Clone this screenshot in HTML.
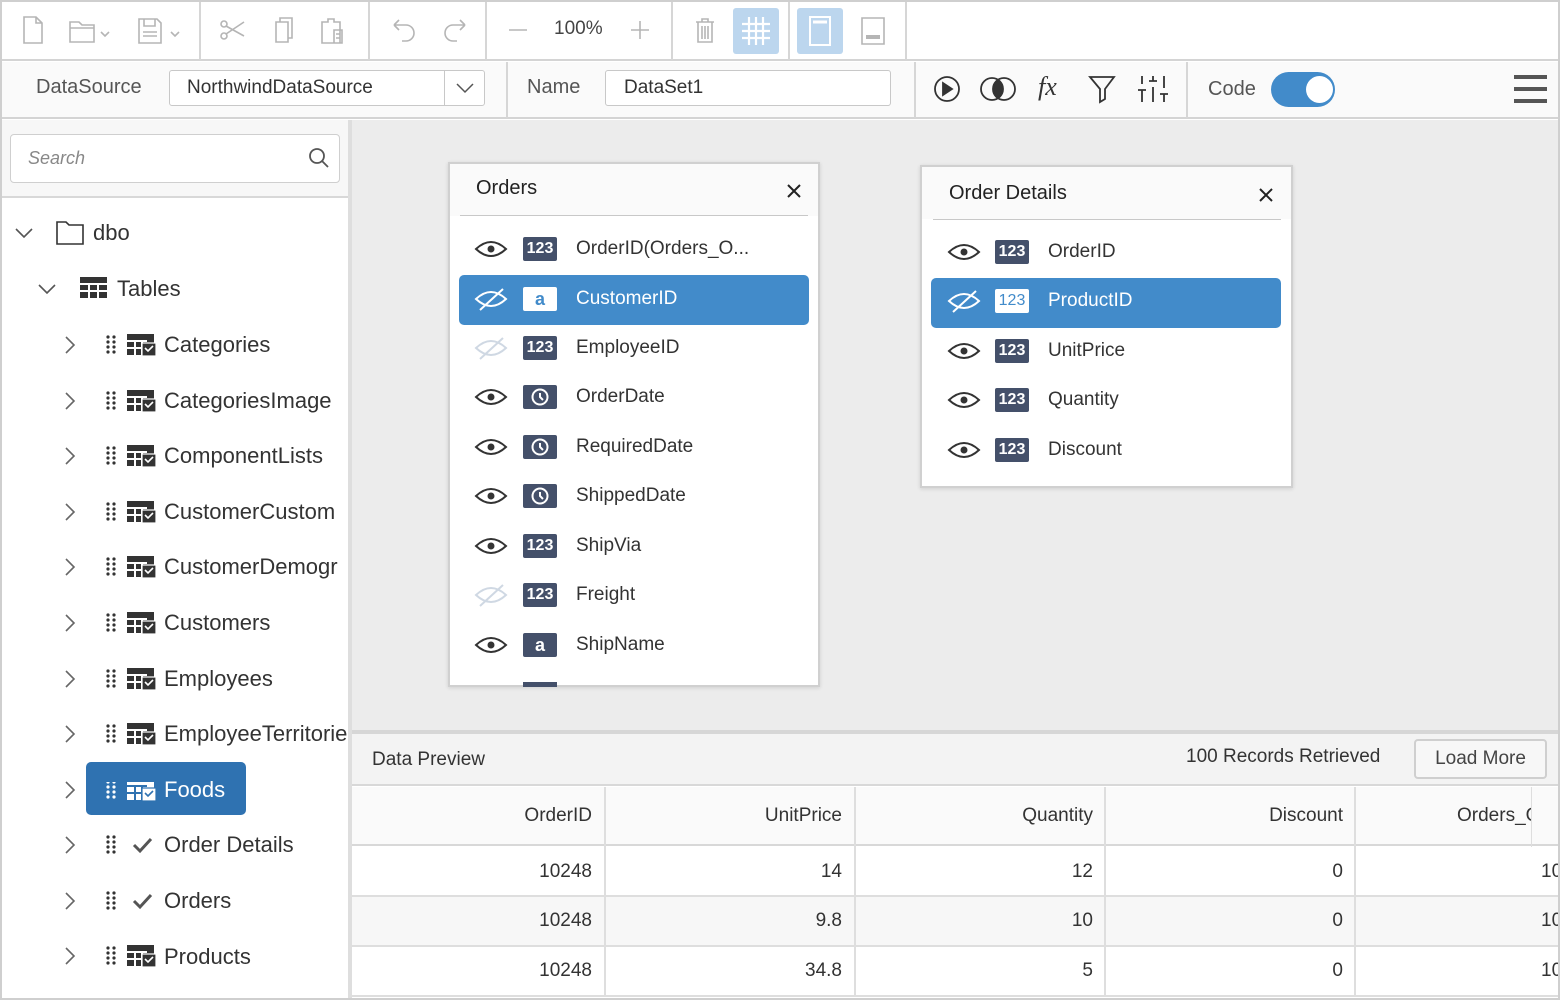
<!DOCTYPE html>
<html><head><meta charset="utf-8">
<style>
*{box-sizing:border-box;margin:0;padding:0}
body{width:1560px;height:1000px;position:relative;overflow:hidden;background:#fff;font-family:"Liberation Sans",sans-serif;color:#333}
.a{position:absolute}
.vd{position:absolute;width:2px;background:#d6d6d6}
.tr{position:absolute;left:0;font-size:22px;color:#333;white-space:nowrap;height:40px;line-height:40px}
.fld{position:absolute;font-size:19px;color:#333;white-space:nowrap;line-height:24px}
.badge{position:absolute;width:34px;height:24px;background:#44506a;border-radius:2px;color:#fff;font-size:16px;font-weight:bold;text-align:center;line-height:24px}
.th,.td{position:absolute;font-size:19px;text-align:right;white-space:nowrap}
</style></head><body>
<div class="a" style="left:0;top:0;width:1560px;height:1000px;border:2px solid #cfcfcf;z-index:50;pointer-events:none"></div>

<div class="a" style="left:0;top:0;width:1560px;height:61px;background:#fff;border-bottom:2px solid #d4d4d4"></div>
<div class="vd" style="left:199px;top:0;height:60px"></div>
<div class="vd" style="left:368px;top:0;height:60px"></div>
<div class="vd" style="left:485px;top:0;height:60px"></div>
<div class="vd" style="left:671px;top:0;height:60px"></div>
<div class="vd" style="left:788px;top:0;height:60px"></div>
<div class="vd" style="left:905px;top:0;height:60px"></div>
<svg class="a" style="left:0;top:0" width="910" height="60" fill="none" stroke="#b5b5b5" stroke-width="1.6">
 <path d="M24 17h12l6 6v20H24z M36 17v6h6"/>
 <path d="M70 22h9l3 3h12v17H70z M70 28h24"/><path d="M101 32l4 4 4-4"/>
 <path d="M139 19h18l4 4v20h-22z M144 19v7h11v-7 M143 32h14 M143 36h14"/><path d="M171 32l4 4 4-4"/>
 <circle cx="224" cy="36" r="3"/><circle cx="224" cy="24" r="3"/><path d="M226 26l18 10 M226 34l18-12"/>
 <path d="M276 22h12v20h-12z M280 22v-4h12v20h-4"/>
 <path d="M322 22h6v-3h6v3h6v21h-18z M334 30h8v13h-8z M336 34h4 M336 38h4"/>
 <path d="M394 25h12a8 8 0 0 1 0 16h-4 M394 25l5-5 M394 25l5 5"/>
 <path d="M465 25h-12a8 8 0 0 0 0 16h4 M465 25l-5-5 M465 25l-5 5"/>
 <path d="M509 30h18 M631 30h18 M640 21v18"/>
 <path d="M696 22h18 M702 22v-3h6v3 M698 22v20h14v-20 M702 26v13 M705 26v13 M708 26v13"/>
 <path d="M862 18h22v26h-22z"/><path d="M866 37h14" stroke-width="4"/>
</svg>
<div class="a" style="left:554px;top:18px;font-size:19px;color:#444">100%</div>
<div class="a" style="left:733px;top:8px;width:46px;height:46px;background:#bcd6ee;border-radius:3px"></div>
<svg class="a" style="left:733px;top:8px" width="46" height="46" stroke="#fff" stroke-width="2.2"><path d="M16 9v28 M23 9v28 M30 9v28 M9 16h28 M9 23h28 M9 30h28"/></svg>
<div class="a" style="left:797px;top:8px;width:46px;height:46px;background:#bcd6ee;border-radius:3px"></div>
<svg class="a" style="left:797px;top:8px" width="46" height="46" fill="none" stroke="#fff" stroke-width="2"><path d="M13 9h20v28H13z"/><path d="M16 14h14" stroke-width="3"/></svg>

<div class="a" style="left:0;top:62px;width:1560px;height:57px;background:#fafafa;border-bottom:2px solid #d4d4d4"></div>
<div class="vd" style="left:506px;top:62px;height:56px"></div>
<div class="vd" style="left:914px;top:62px;height:56px"></div>
<div class="vd" style="left:1186px;top:62px;height:56px"></div>
<div class="a" style="left:36px;top:76px;font-size:20px;color:#555">DataSource</div>
<div class="a" style="left:169px;top:70px;width:316px;height:36px;border:1px solid #c8c8c8;border-radius:3px;background:#fff"></div>
<div class="a" style="left:444px;top:71px;width:1px;height:34px;background:#c8c8c8"></div>
<div class="a" style="left:187px;top:77px;font-size:19px;color:#333">NorthwindDataSource</div>
<svg class="a" style="left:455px;top:80px" width="20" height="16" fill="none" stroke="#555" stroke-width="1.5"><path d="M2 4l8 8 8-8"/></svg>
<div class="a" style="left:527px;top:76px;font-size:20px;color:#555">Name</div>
<div class="a" style="left:605px;top:70px;width:286px;height:36px;border:1px solid #c8c8c8;border-radius:3px;background:#fff"></div>
<div class="a" style="left:624px;top:77px;font-size:19px;color:#333">DataSet1</div>
<svg class="a" style="left:920px;top:64px" width="260" height="54" fill="none" stroke="#333" stroke-width="1.8">
 <circle cx="27" cy="25" r="12"/><path d="M23 19v12l9-6z" fill="#333"/>
 <circle cx="72" cy="25" r="11"/><circle cx="84" cy="25" r="11"/><path d="M78 16a11 11 0 0 1 0 18a11 11 0 0 1 0-18z" fill="#333"/>
 <path d="M170 13h24l-9 12v10l-5 3v-13z"/>
 <path d="M222 12v8 M222 26v12 M218 26h8 M233 12v5 M233 23v15 M229 17h8 M244 12v12 M244 30v8 M240 30h8"/>
</svg>
<div class="a" style="left:1038px;top:72px;font-size:26px;font-style:italic;font-family:'Liberation Serif',serif;color:#333">fx</div>
<div class="a" style="left:1208px;top:78px;font-size:20px;color:#555">Code</div>
<div class="a" style="left:1271px;top:72px;width:64px;height:35px;border-radius:18px;background:#428bca"></div>
<div class="a" style="left:1306px;top:76px;width:27px;height:27px;border-radius:50%;background:#fff"></div>
<div class="a" style="left:1514px;top:75px;width:33px;height:4px;background:#555"></div>
<div class="a" style="left:1514px;top:87px;width:33px;height:4px;background:#555"></div>
<div class="a" style="left:1514px;top:99px;width:33px;height:4px;background:#555"></div>

<div class="a" style="left:0;top:120px;width:348px;height:880px;background:#fff"></div>
<div class="a" style="left:0;top:120px;width:348px;height:78px;background:#f7f7f7;border-bottom:2px solid #d8d8d8"></div>
<div class="a" style="left:348px;top:120px;width:4px;height:880px;background:#dedede"></div>
<div class="a" style="left:10px;top:134px;width:330px;height:49px;border:1px solid #cfcfcf;border-radius:4px;background:#fff"></div>
<div class="a" style="left:28px;top:148px;font-size:18px;color:#888;font-style:italic">Search</div>
<svg class="a" style="left:306px;top:145px" width="26" height="26" fill="none" stroke="#555" stroke-width="1.8"><circle cx="11" cy="11" r="7"/><path d="M16 16l6 6"/></svg>

<svg class="a" style="left:0;top:200px" width="348" height="800" fill="none" stroke="#555" stroke-width="1.6">
 <path d="M16 29l8 8 8-8"/><path d="M57 22h9l3 3h14v19H57z" stroke="#333"/>
 <path d="M39 85l8 8 8-8"/>
 <g stroke="none" fill="#333"><path d="M80 77h27v21H80z"/></g>
 <g stroke="#fff" stroke-width="2"><path d="M80 84h27 M80 91h27 M89 84v14 M98 84v14"/></g>
</svg>
<div class="tr" style="left:93px;top:213px">dbo</div>
<div class="tr" style="left:117px;top:269px">Tables</div>

<svg class="a" style="left:0;top:320px" width="348" height="680">
 <defs>
  <g id="chev"><path d="M66 0l8 8-8 8" fill="none" stroke="#666" stroke-width="1.6"/></g>
  <g id="dots" fill="#333"><circle cx="108" cy="-8" r="1.6"/><circle cx="114" cy="-8" r="1.6"/><circle cx="108" cy="-3" r="1.6"/><circle cx="114" cy="-3" r="1.6"/><circle cx="108" cy="2" r="1.6"/><circle cx="114" cy="2" r="1.6"/><circle cx="108" cy="7" r="1.6"/><circle cx="114" cy="7" r="1.6"/></g>
  <g id="tbl"><rect x="127" y="-11" width="27" height="21" fill="#333"/><path d="M127 -4h20 M127 3h20 M135 -4v14 M142 -4v14" stroke="#fff" stroke-width="2"/><rect x="142" y="-2" width="14" height="13" fill="#333" stroke="#fff" stroke-width="1.2"/><path d="M145 3l3 3 5-5" stroke="#fff" stroke-width="1.6" fill="none"/></g>
 </defs>
 <g transform="translate(0,17)"><use href="#chev" y="0"/><use href="#dots" y="8"/><use href="#tbl" y="8"/></g>
 <g transform="translate(0,73)"><use href="#chev"/><use href="#dots" y="8"/><use href="#tbl" y="8"/></g>
 <g transform="translate(0,128)"><use href="#chev"/><use href="#dots" y="8"/><use href="#tbl" y="8"/></g>
 <g transform="translate(0,184)"><use href="#chev"/><use href="#dots" y="8"/><use href="#tbl" y="8"/></g>
 <g transform="translate(0,239)"><use href="#chev"/><use href="#dots" y="8"/><use href="#tbl" y="8"/></g>
 <g transform="translate(0,295)"><use href="#chev"/><use href="#dots" y="8"/><use href="#tbl" y="8"/></g>
 <g transform="translate(0,351)"><use href="#chev"/><use href="#dots" y="8"/><use href="#tbl" y="8"/></g>
 <g transform="translate(0,406)"><use href="#chev"/><use href="#dots" y="8"/><use href="#tbl" y="8"/></g>
 <g transform="translate(0,462)"><use href="#chev"/></g>
 <g transform="translate(0,517)"><use href="#chev"/><use href="#dots" y="8"/><path d="M134 8l6 6 11-12" stroke="#555" stroke-width="3" fill="none"/></g>
 <g transform="translate(0,573)"><use href="#chev"/><use href="#dots" y="8"/><path d="M134 8l6 6 11-12" stroke="#555" stroke-width="3" fill="none"/></g>
 <g transform="translate(0,628)"><use href="#chev"/><use href="#dots" y="8"/><use href="#tbl" y="8"/></g>
</svg>
<div class="a" style="left:86px;top:762px;width:160px;height:53px;background:#2f72b1;border-radius:5px"></div>
<svg class="a" style="left:0;top:782px" width="250" height="30">
 <g fill="#fff"><circle cx="108" cy="0" r="1.6"/><circle cx="114" cy="0" r="1.6"/><circle cx="108" cy="5" r="1.6"/><circle cx="114" cy="5" r="1.6"/><circle cx="108" cy="10" r="1.6"/><circle cx="114" cy="10" r="1.6"/><circle cx="108" cy="15" r="1.6"/><circle cx="114" cy="15" r="1.6"/></g>
 <rect x="127" y="-3" width="27" height="21" fill="#fff"/><path d="M127 4h20 M127 11h20 M135 4v14 M142 4v14" stroke="#2f72b1" stroke-width="2"/><rect x="142" y="6" width="14" height="13" fill="#fff" stroke="#2f72b1" stroke-width="1.2"/><path d="M145 11l3 3 5-5" stroke="#2f72b1" stroke-width="1.6" fill="none"/>
</svg>
<div class="tr" style="left:164px;top:325px">Categories</div>
<div class="tr" style="left:164px;top:381px">CategoriesImage</div>
<div class="tr" style="left:164px;top:436px">ComponentLists</div>
<div class="tr" style="left:164px;top:492px">CustomerCustom</div>
<div class="tr" style="left:164px;top:547px">CustomerDemogr</div>
<div class="tr" style="left:164px;top:603px">Customers</div>
<div class="tr" style="left:164px;top:659px">Employees</div>
<div class="tr" style="left:164px;top:714px;width:184px;overflow:hidden">EmployeeTerritories</div>
<div class="tr" style="left:164px;top:770px;color:#fff">Foods</div>
<div class="tr" style="left:164px;top:825px">Order Details</div>
<div class="tr" style="left:164px;top:881px">Orders</div>
<div class="tr" style="left:164px;top:937px">Products</div>

<div class="a" style="left:352px;top:120px;width:1208px;height:610px;background:#ececec"></div>

<svg width="0" height="0" style="position:absolute">
 <defs>
  <g id="eye" fill="none" stroke="#333" stroke-width="2"><path d="M1 10Q16 -4 31 10Q16 24 1 10Z"/><circle cx="16" cy="10" r="3.5" fill="#333" stroke="none"/></g>
  <g id="eyeh" fill="none" stroke-width="2"><path d="M1 10Q16 -4 31 10Q16 24 1 10Z"/><path d="M5 21L28 0"/></g>
 </defs>
</svg>

<div class="a" style="left:448px;top:162px;width:372px;height:525px;background:#fff;border:2px solid #d0d0d0;box-shadow:0 1px 4px rgba(0,0,0,.12);overflow:hidden">
 <div class="a" style="left:0;top:0;width:370px;height:52px;background:#fafafa"></div>
 <div class="a" style="left:10px;top:51px;width:348px;height:1px;background:#c8c8c8"></div>
 <div class="a" style="left:26px;top:13px;font-size:20px;color:#222">Orders</div>
 <svg class="a" style="left:336px;top:19px" width="16" height="16" stroke="#222" stroke-width="2"><path d="M2 2l12 12M14 2L2 14"/></svg>
 <div class="a" style="left:9px;top:111px;width:350px;height:50px;background:#428bca;border-radius:5px"></div>
</div>
<svg class="a" style="left:448px;top:162px" width="372" height="525">
 <use href="#eye" x="27" y="77"/>
 <use href="#eyeh" x="27" y="127" stroke="#fff"/>
 <use href="#eyeh" x="27" y="176" stroke="#cfd8e3"/>
 <use href="#eye" x="27" y="225"/>
 <use href="#eye" x="27" y="275"/>
 <use href="#eye" x="27" y="324"/>
 <use href="#eye" x="27" y="374"/>
 <use href="#eyeh" x="27" y="423" stroke="#cfd8e3"/>
 <use href="#eye" x="27" y="473"/>
 <rect x="75" y="520" width="34" height="6" fill="#44506a"/>
</svg>
<div class="badge" style="left:523px;top:237px">123</div>
<div class="badge" style="left:523px;top:287px;background:#fff;color:#428bca;font-size:18px">a</div>
<div class="badge" style="left:523px;top:336px">123</div>
<div class="badge" style="left:523px;top:385px"><svg width="34" height="24" fill="none" stroke="#fff" stroke-width="2"><circle cx="17" cy="12" r="7.5"/><path d="M17 8v4l3 3"/></svg></div>
<div class="badge" style="left:523px;top:435px"><svg width="34" height="24" fill="none" stroke="#fff" stroke-width="2"><circle cx="17" cy="12" r="7.5"/><path d="M17 8v4l3 3"/></svg></div>
<div class="badge" style="left:523px;top:484px"><svg width="34" height="24" fill="none" stroke="#fff" stroke-width="2"><circle cx="17" cy="12" r="7.5"/><path d="M17 8v4l3 3"/></svg></div>
<div class="badge" style="left:523px;top:534px">123</div>
<div class="badge" style="left:523px;top:583px">123</div>
<div class="badge" style="left:523px;top:633px;font-size:18px">a</div>
<div class="fld" style="left:576px;top:237px">OrderID(Orders_O...</div>
<div class="fld" style="left:576px;top:287px;color:#fff">CustomerID</div>
<div class="fld" style="left:576px;top:336px">EmployeeID</div>
<div class="fld" style="left:576px;top:385px">OrderDate</div>
<div class="fld" style="left:576px;top:435px">RequiredDate</div>
<div class="fld" style="left:576px;top:484px">ShippedDate</div>
<div class="fld" style="left:576px;top:534px">ShipVia</div>
<div class="fld" style="left:576px;top:583px">Freight</div>
<div class="fld" style="left:576px;top:633px">ShipName</div>

<div class="a" style="left:920px;top:165px;width:373px;height:323px;background:#fff;border:2px solid #d0d0d0;box-shadow:0 1px 4px rgba(0,0,0,.12);overflow:hidden">
 <div class="a" style="left:0;top:0;width:371px;height:52px;background:#fafafa"></div>
 <div class="a" style="left:11px;top:52px;width:348px;height:1px;background:#c8c8c8"></div>
 <div class="a" style="left:27px;top:15px;font-size:20px;color:#222">Order Details</div>
 <svg class="a" style="left:336px;top:20px" width="16" height="16" stroke="#222" stroke-width="2"><path d="M2 2l12 12M14 2L2 14"/></svg>
 <div class="a" style="left:9px;top:111px;width:350px;height:50px;background:#428bca;border-radius:5px"></div>
</div>
<svg class="a" style="left:920px;top:165px" width="373" height="323">
 <use href="#eye" x="28" y="77"/>
 <use href="#eyeh" x="28" y="126" stroke="#fff"/>
 <use href="#eye" x="28" y="176"/>
 <use href="#eye" x="28" y="225"/>
 <use href="#eye" x="28" y="275"/>
</svg>
<div class="badge" style="left:995px;top:240px">123</div>
<div class="badge" style="left:995px;top:289px;background:#fff;color:#428bca;font-weight:normal">123</div>
<div class="badge" style="left:995px;top:339px">123</div>
<div class="badge" style="left:995px;top:388px">123</div>
<div class="badge" style="left:995px;top:438px">123</div>
<div class="fld" style="left:1048px;top:240px">OrderID</div>
<div class="fld" style="left:1048px;top:289px;color:#fff">ProductID</div>
<div class="fld" style="left:1048px;top:339px">UnitPrice</div>
<div class="fld" style="left:1048px;top:388px">Quantity</div>
<div class="fld" style="left:1048px;top:438px">Discount</div>

<div class="a" style="left:352px;top:730px;width:1208px;height:4px;background:#d6d6d6"></div>
<div class="a" style="left:352px;top:734px;width:1208px;height:52px;background:#f3f3f3;border-bottom:2px solid #d8d8d8"></div>
<div class="a" style="left:372px;top:749px;font-size:19px;color:#333">Data Preview</div>
<div class="a" style="left:1186px;top:746px;font-size:19px;color:#333">100 Records Retrieved</div>
<div class="a" style="left:1414px;top:739px;width:133px;height:40px;border:2px solid #cfcfcf;border-radius:4px;background:#f7f7f7;font-size:19px;color:#444;text-align:center;line-height:35px">Load More</div>
<div class="a" style="left:352px;top:787px;width:1208px;height:59px;background:#fafafa;border-bottom:2px solid #d8d8d8"></div>
<div class="a" style="left:352px;top:897px;width:1208px;height:50px;background:#f7f7f7"></div>
<div class="a" style="left:352px;top:895px;width:1208px;height:2px;background:#dedede"></div>
<div class="a" style="left:352px;top:945px;width:1208px;height:2px;background:#dedede"></div>
<div class="a" style="left:352px;top:995px;width:1208px;height:2px;background:#dedede"></div>
<div class="a" style="left:604px;top:787px;width:2px;height:210px;background:#dedede"></div>
<div class="a" style="left:854px;top:787px;width:2px;height:210px;background:#dedede"></div>
<div class="a" style="left:1104px;top:787px;width:2px;height:210px;background:#dedede"></div>
<div class="a" style="left:1354px;top:787px;width:2px;height:210px;background:#dedede"></div>
<div class="a" style="left:1531px;top:787px;width:1px;height:60px;background:#dedede"></div>
<div class="th" style="right:968px;top:805px">OrderID</div>
<div class="th" style="right:718px;top:805px">UnitPrice</div>
<div class="th" style="right:467px;top:805px">Quantity</div>
<div class="th" style="right:217px;top:805px">Discount</div>
<div class="a" style="left:1457px;top:805px;width:74px;overflow:hidden;font-size:19px;white-space:nowrap">Orders_OrderID</div>
<div class="td" style="right:968px;top:861px">10248</div><div class="td" style="right:718px;top:861px">14</div><div class="td" style="right:467px;top:861px">12</div><div class="td" style="right:217px;top:861px">0</div>
<div class="td" style="right:968px;top:910px">10248</div><div class="td" style="right:718px;top:910px">9.8</div><div class="td" style="right:467px;top:910px">10</div><div class="td" style="right:217px;top:910px">0</div>
<div class="td" style="right:968px;top:960px">10248</div><div class="td" style="right:718px;top:960px">34.8</div><div class="td" style="right:467px;top:960px">5</div><div class="td" style="right:217px;top:960px">0</div>
<div class="a" style="left:1541px;top:861px;font-size:19px">10</div>
<div class="a" style="left:1541px;top:910px;font-size:19px">10</div>
<div class="a" style="left:1541px;top:960px;font-size:19px">10</div>
</body></html>
